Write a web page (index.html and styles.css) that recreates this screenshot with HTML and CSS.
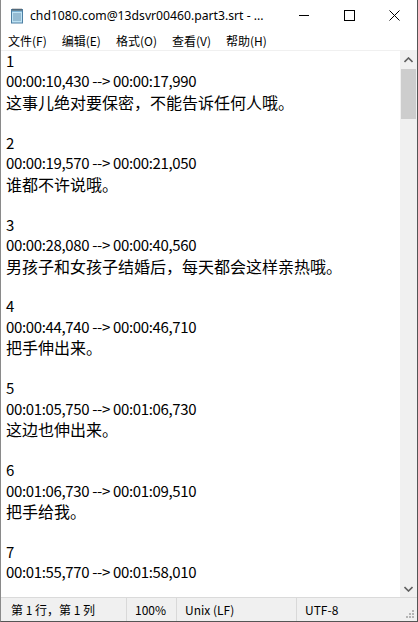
FILE: index.html
```html
<!DOCTYPE html>
<html lang="zh-CN">
<head>
    <meta charset="UTF-8">
    <meta name="viewport" content="width=device-width, initial-scale=1.0">
    <title>chd1080.com@13dsvr00460.part3.srt - 记事本</title>
    <link rel="stylesheet" href="styles.css">
</head>
<body>
    <div class="window">
        <div class="titlebar">
            <svg class="app-icon" width="16" height="16" viewBox="0 0 16 16">
                <rect x="2.5" y="1.5" width="11" height="13.5" fill="#bfe3f4" stroke="#4d7fa3"/>
                <rect x="3" y="2" width="10" height="2" fill="#7db4d6"/>
                <path d="M4 6h8M4 8h8M4 10h8M4 12h8" stroke="#6b93b0" stroke-width="1"/>
                <path d="M4 0.5v2.5M6 0.5v2.5M8 0.5v2.5M10 0.5v2.5M12 0.5v2.5" stroke="#555" stroke-width="1"/>
            </svg>
            <span class="title">chd1080.com@13dsvr00460.part3.srt - ...</span>
            <div class="controls">
                <span class="ctl">
                    <svg width="11" height="11" viewBox="0 0 11 11"><path d="M0 5.5h10" stroke="#000" stroke-width="1"/></svg>
                </span>
                <span class="ctl">
                    <svg width="11" height="11" viewBox="0 0 11 11"><rect x="0.5" y="0.5" width="10" height="10" fill="none" stroke="#000"/></svg>
                </span>
                <span class="ctl">
                    <svg width="11" height="11" viewBox="0 0 11 11"><path d="M0.5 0.5l10 10M10.5 0.5l-10 10" stroke="#000" stroke-width="1"/></svg>
                </span>
            </div>
        </div>

        <div class="menubar">
            <span>文件(F)</span>
            <span>编辑(E)</span>
            <span>格式(O)</span>
            <span>查看(V)</span>
            <span>帮助(H)</span>
        </div>

        <div class="editor">
            <div class="text">
                <div>1</div>
                <div class="time">00:00:10,430 --&gt; 00:00:17,990</div>
                <div class="zh">这事儿绝对要保密，不能告诉任何人哦。</div>
                <div>&nbsp;</div>
                <div>2</div>
                <div class="time">00:00:19,570 --&gt; 00:00:21,050</div>
                <div class="zh">谁都不许说哦。</div>
                <div>&nbsp;</div>
                <div>3</div>
                <div class="time">00:00:28,080 --&gt; 00:00:40,560</div>
                <div class="zh">男孩子和女孩子结婚后，每天都会这样亲热哦。</div>
                <div>&nbsp;</div>
                <div>4</div>
                <div class="time">00:00:44,740 --&gt; 00:00:46,710</div>
                <div class="zh">把手伸出来。</div>
                <div>&nbsp;</div>
                <div>5</div>
                <div class="time">00:01:05,750 --&gt; 00:01:06,730</div>
                <div class="zh">这边也伸出来。</div>
                <div>&nbsp;</div>
                <div>6</div>
                <div class="time">00:01:06,730 --&gt; 00:01:09,510</div>
                <div class="zh">把手给我。</div>
                <div>&nbsp;</div>
                <div>7</div>
                <div class="time">00:01:55,770 --&gt; 00:01:58,010</div>
            </div>
            <div class="scrollbar">
                <span class="arrow">
                    <svg width="9" height="6" viewBox="0 0 9 6"><path d="M0.5 5L4.5 1L8.5 5" fill="none" stroke="#606060" stroke-width="1.6"/></svg>
                </span>
                <div class="track">
                    <div class="thumb"></div>
                </div>
                <span class="arrow">
                    <svg width="9" height="6" viewBox="0 0 9 6"><path d="M0.5 1L4.5 5L8.5 1" fill="none" stroke="#606060" stroke-width="1.6"/></svg>
                </span>
            </div>
        </div>

        <div class="statusbar">
            <span class="cell pos">第 1 行，第 1 列</span>
            <span class="cell zoom">100%</span>
            <span class="cell eol">Unix (LF)</span>
            <span class="cell enc">UTF-8</span>
            <svg class="grip" width="10" height="10" viewBox="0 0 10 10">
                <rect x="7" y="1" width="2" height="2" fill="#b5b5b5"/>
                <rect x="4" y="4" width="2" height="2" fill="#b5b5b5"/>
                <rect x="7" y="4" width="2" height="2" fill="#b5b5b5"/>
                <rect x="1" y="7" width="2" height="2" fill="#b5b5b5"/>
                <rect x="4" y="7" width="2" height="2" fill="#b5b5b5"/>
                <rect x="7" y="7" width="2" height="2" fill="#b5b5b5"/>
            </svg>
        </div>
    </div>
</body>
</html>
```

FILE: styles.css
```css
html, body {
    margin: 0;
    padding: 0;
    background: #fff;
}
body {
    font-family: "Noto Sans CJK SC", "Noto Sans", sans-serif;
    color: #000;
}
.window {
    width: 418px;
    height: 622px;
    box-sizing: border-box;
    border-left: 1px solid #8a8a8a;
    border-right: 1px solid #555;
    border-bottom: 1px solid #555;
    display: flex;
    flex-direction: column;
    overflow: hidden;
}
.titlebar {
    height: 31px;
    display: flex;
    align-items: center;
    flex-shrink: 0;
}
.app-icon {
    margin-left: 8px;
    margin-right: 5px;
}
.title {
    font-family: "Noto Sans", sans-serif;
    font-size: 12.2px;
    white-space: nowrap;
    flex: 1;
}
.controls {
    display: flex;
    height: 31px;
}
.ctl {
    width: 45px;
    display: flex;
    align-items: center;
    justify-content: center;
}
.menubar {
    height: 19px;
    display: flex;
    align-items: center;
    font-size: 12px;
    padding-left: 7px;
    gap: 15px;
    flex-shrink: 0;
    border-bottom: 1px solid #f0f0f0;
}
.editor {
    flex: 1;
    display: flex;
    min-height: 0;
}
.text {
    flex: 1;
    padding: 0 0 0 5px;
    font-size: 15px;
    line-height: 20.45px;
    white-space: nowrap;
    overflow: hidden;
}
.time {
    letter-spacing: -0.35px;
}
.zh {
    font-size: 16px;
}
.scrollbar {
    width: 17px;
    background: #f0f0f0;
    display: flex;
    flex-direction: column;
}
.arrow {
    height: 17px;
    display: flex;
    align-items: center;
    justify-content: center;
}
.track {
    flex: 1;
    padding: 1px 1px 0 1px;
}
.thumb {
    height: 50px;
    background: #cdcdcd;
}
.statusbar {
    height: 23px;
    background: #f0f0f0;
    border-top: 1px solid #dadada;
    display: flex;
    align-items: center;
    font-size: 12px;
    position: relative;
    flex-shrink: 0;
}
.cell {
    height: 100%;
    display: flex;
    align-items: center;
    box-sizing: border-box;
    padding-left: 10px;
    border-right: 1px solid #d9d9d9;
}
.pos { width: 126px; }
.zoom { width: 50px; padding-left: 8px; }
.eol { width: 120px; padding-left: 8px; }
.enc { flex: 1; border-right: none; padding-left: 8px; }
.grip {
    position: absolute;
    right: 2px;
    bottom: 2px;
}
```
